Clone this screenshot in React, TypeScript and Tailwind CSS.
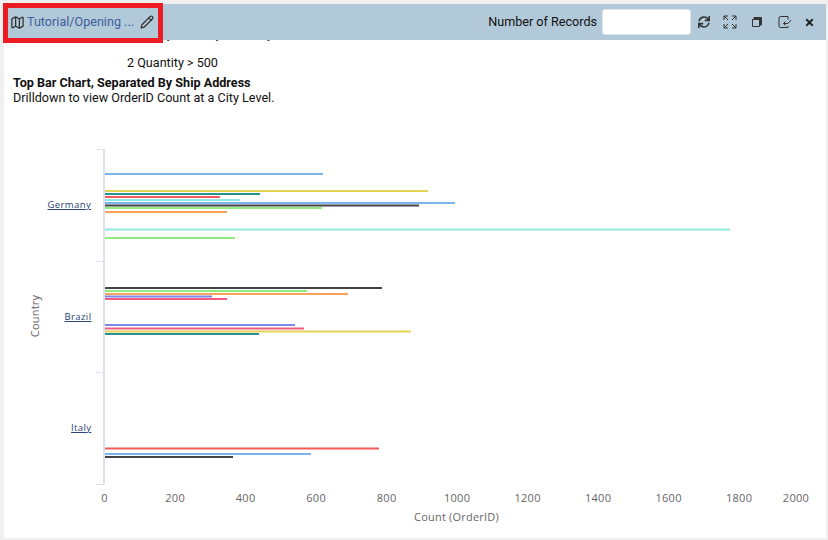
import { Map as MapIcon, Pencil } from "lucide-react";
import { FaSync, FaTimes } from "react-icons/fa";

const X0 = 105;
const scale = 0.3525;

// [y, right edge in px, colour]
const bars: [number, number, string][] = [
  [174, 323, "#7cb5ec"],
  [191, 428, "#e4d354"],
  [194, 260, "#2b908f"],
  [197, 220, "#f45b5b"],
  [200, 240, "#91e8e1"],
  [203, 455, "#7cb5ec"],
  [205.5, 419, "#434348"],
  [208, 322, "#90ed7d"],
  [212, 227, "#f7a35c"],
  [229.5, 730, "#91e8e1"],
  [238, 235, "#90ed7d"],
  [288, 382, "#434348"],
  [291, 307, "#90ed7d"],
  [294, 348, "#f7a35c"],
  [296.5, 212, "#8085e9"],
  [299, 227, "#f15c80"],
  [325, 295, "#8085e9"],
  [328.5, 304, "#f15c80"],
  [331.5, 411, "#e4d354"],
  [334, 259, "#2b908f"],
  [448.5, 379, "#f45b5b"],
  [454, 311, "#7cb5ec"],
  [457, 233, "#434348"],
];

const ticks = [0, 200, 400, 600, 800, 1000, 1200, 1400, 1600, 1800];

function Chart() {
  return (
    <svg width="822" height="433" viewBox="4 105 822 433" className="block" style={{ fontFamily: '"Open Sans", sans-serif' }}>
      <path d="M104 149V484.5" stroke="#ccd9e8" strokeWidth="1.5" fill="none" />
      <path d="M96 149.5H104M96 261.5H104M96 372.5H104M96 484.5H104" stroke="#dbe3ee" fill="none" />
      {bars.map(([y, x2, color], i) => (
        <line key={i} x1={X0} x2={x2} y1={y} y2={y} stroke={color} strokeWidth="2" />
      ))}
      {[["Germany", 205, 47.5], ["Brazil", 317, 64.5], ["Italy", 428, 71]].map(([name, y, x]) => (
        <text key={name} x={x} y={Number(y) + 3} fontSize="9.5" fill="#1f3f77" textDecoration="underline" letterSpacing="0.4">
          {name}
        </text>
      ))}
      <text x="39" y="316" fontSize="11" fill="#666666" textAnchor="middle" transform="rotate(-90 39 316)" letterSpacing="0.2">
        Country
      </text>
      {ticks.map((t) => (
        <text key={t} x={104.6 + t * scale} y="502" fontSize="11" fill="#666666" textAnchor="middle" letterSpacing="0.3">
          {t}
        </text>
      ))}
      <text x="796" y="502" fontSize="11" fill="#666666" textAnchor="middle" letterSpacing="0.3">
        2000
      </text>
      <text x="456.5" y="521" fontSize="11" fill="#666666" textAnchor="middle" letterSpacing="0.2">
        Count (OrderID)
      </text>
    </svg>
  );
}

export default function App() {
  return (
    <div className="relative h-[540px] w-[828px] overflow-hidden bg-[#f0f0f0] pt-1 pl-1 font-['Roboto',sans-serif] text-[12.6px] text-[#111]">
      <div className="flex h-[534px] w-[822px] flex-col bg-white">
        <header className="flex h-9 items-center bg-[#b1c9d9] pr-[11px] pl-1.5">
          <MapIcon className="size-[15px] text-[#333]" strokeWidth={2} />
          <span className="ml-[2px] text-[#3f5f9a]">Tutorial/Opening ...</span>
          <Pencil className="ml-[6px] size-[14px] text-[#333]" strokeWidth={2.2} />
          <span className="ml-auto text-[#111]">Number of Records</span>
          <div className="ml-[5px] h-[26px] w-[89px] rounded-[3px] border border-[#dde4ea] bg-white" />
          <FaSync className="ml-[7px] size-[12px] text-[#333]" />
          <svg viewBox="0 0 14 14" className="ml-[13px] size-[14px]" fill="none" stroke="#333" strokeWidth="1">
            <path d="M1 5V1H5M9 1H13V5M13 9V13H9M5 13H1V9M1 1L5 5M13 1L9 5M13 13L9 9M1 13L5 9" />
          </svg>
          <svg viewBox="0 0 12 12" className="ml-[14px] size-[12px]" fill="none" stroke="#333">
            <path d="M1.5 3.5H8.5V10.5H1.5Z" />
            <path d="M3 1.5H10.5V9H8.5V3.5H3Z" fill="#333" />
          </svg>
          <svg viewBox="0 0 14 14" className="ml-[15px] size-[14px]" fill="none" stroke="#333" strokeWidth="1">
            <path d="M10 4.5V1.5H2.5Q1 1.5 1 3V11Q1 12.5 2.5 12.5H10V11" />
            <path d="M13 5L10 8.5H5.5M7.5 6.5L5.5 8.5L7.5 10.5" />
          </svg>
          <FaTimes className="ml-[12px] size-[11px] text-[#222]" />
        </header>
        <div className="h-px overflow-hidden">
          <p className="-mt-[14px] pl-[122px] leading-4 text-[#333]">Quantity, Country, Quantity</p>
        </div>
        <p className="mt-[14px] pl-[123px] leading-4">2 Quantity &gt; 500</p>
        <p className="mt-[4px] pl-[9px] leading-[15px] font-bold">Top Bar Chart, Separated By Ship Address</p>
        <p className="pl-[9px] leading-[15px]">Drilldown to view OrderID Count at a City Level.</p>
        <Chart />
      </div>
      {/* red callout */}
      <div className="absolute top-[3px] left-[3px] h-10 w-40 border-[5px] border-[#ed1c24]" />
    </div>
  );
}
